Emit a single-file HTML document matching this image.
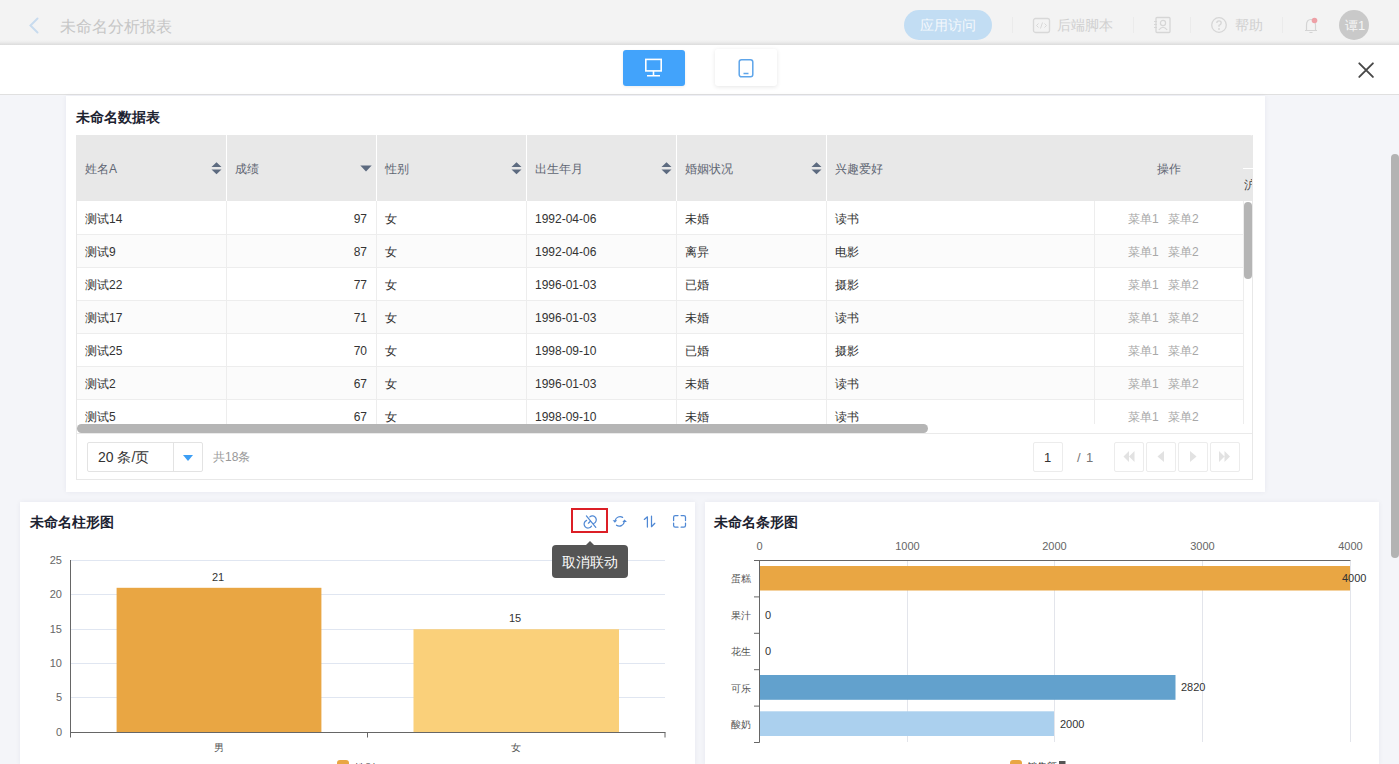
<!DOCTYPE html>
<html><head><meta charset="utf-8">
<style>
*{box-sizing:border-box;margin:0;padding:0}
html,body{width:1399px;height:764px;overflow:hidden}
body{font-family:"Liberation Sans",sans-serif;background:#f4f5f9;position:relative;color:#333;font-size:12px}
.a{position:absolute}
.t{position:absolute;white-space:nowrap;line-height:1}
#hdr{left:0;top:0;width:1399px;height:45px;background:linear-gradient(to bottom,#f3f3f3 0px,#f3f3f3 40px,#ededed 42px,#e4e4e4 43.5px,#dcdcdc 45px)}
#tb{left:0;top:45px;width:1399px;height:50px;background:#fff;border-bottom:1px solid #e0e0e0}
.card{background:#fff;position:absolute;box-shadow:0 0 5px rgba(30,40,80,0.06)}
.title{position:absolute;font-weight:bold;font-size:14px;color:#1d2331;white-space:nowrap;line-height:1}
.th{position:absolute;top:135px;height:66px;background:#e8e8e8}
.htx{position:absolute;color:#5f6673;font-size:12px;line-height:1;white-space:nowrap}
.cell{position:absolute;font-size:12px;color:#333;line-height:1;white-space:nowrap}
.vl{position:absolute;width:1px;background:#ededed}
.hl{position:absolute;height:1px;background:#ededed}
.op{position:absolute;font-size:12px;color:#a8a8a8;line-height:1;white-space:nowrap}
.sep{position:absolute;width:1px;height:16px;top:17px;background:#ebebeb}
.pbtn{position:absolute;top:442px;width:30px;height:30px;border:1px solid #ececec;border-radius:2px;background:#fff}
.yl{position:absolute;font-size:11px;color:#666;line-height:1;white-space:nowrap;text-align:right}
.val{position:absolute;font-size:11px;color:#333;line-height:1;white-space:nowrap}
</style></head><body>

<div id="hdr" class="a"></div>
<div id="tb" class="a"></div>
<div class="card" style="left:66px;top:96px;width:1199px;height:396px"></div>
<div class="title" style="left:76px;top:110px">未命名数据表</div>
<div class="a" style="left:76px;top:135px;width:1177px;height:345px;border:1px solid #e8e8e8;border-top:none"></div>
<div class="th" style="left:76px;width:1177px;border-top-right-radius:3px"></div>
<div class="htx" style="left:85px;top:163px">姓名A</div>
<div class="htx" style="left:235px;top:163px">成绩</div>
<div class="a" style="left:226px;top:135px;width:1px;height:66px;background:#fff"></div>
<div class="htx" style="left:385px;top:163px">性别</div>
<div class="a" style="left:376px;top:135px;width:1px;height:66px;background:#fff"></div>
<div class="htx" style="left:535px;top:163px">出生年月</div>
<div class="a" style="left:526px;top:135px;width:1px;height:66px;background:#fff"></div>
<div class="htx" style="left:685px;top:163px">婚姻状况</div>
<div class="a" style="left:676px;top:135px;width:1px;height:66px;background:#fff"></div>
<div class="htx" style="left:835px;top:163px">兴趣爱好</div>
<div class="a" style="left:826px;top:135px;width:1px;height:66px;background:#fff"></div>
<div class="htx" style="left:1157px;top:163px">操作</div>
<div class="a" style="left:1243px;top:168px;width:10px;height:1px;background:#fff"></div>
<div class="hl" style="left:77px;top:234px;width:1166px"></div>
<div class="cell" style="left:85px;top:213px">测试14</div>
<div class="cell" style="left:226px;width:141px;text-align:right;top:213px">97</div>
<div class="cell" style="left:385px;top:213px">女</div>
<div class="cell" style="left:535px;top:213px">1992-04-06</div>
<div class="cell" style="left:685px;top:213px">未婚</div>
<div class="cell" style="left:835px;top:213px">读书</div>
<div class="op" style="left:1128px;top:213px">菜单1</div>
<div class="op" style="left:1168px;top:213px">菜单2</div>
<div class="a" style="left:77px;top:235px;width:1166px;height:32px;background:#fbfbfb"></div>
<div class="hl" style="left:77px;top:267px;width:1166px"></div>
<div class="cell" style="left:85px;top:246px">测试9</div>
<div class="cell" style="left:226px;width:141px;text-align:right;top:246px">87</div>
<div class="cell" style="left:385px;top:246px">女</div>
<div class="cell" style="left:535px;top:246px">1992-04-06</div>
<div class="cell" style="left:685px;top:246px">离异</div>
<div class="cell" style="left:835px;top:246px">电影</div>
<div class="op" style="left:1128px;top:246px">菜单1</div>
<div class="op" style="left:1168px;top:246px">菜单2</div>
<div class="hl" style="left:77px;top:300px;width:1166px"></div>
<div class="cell" style="left:85px;top:279px">测试22</div>
<div class="cell" style="left:226px;width:141px;text-align:right;top:279px">77</div>
<div class="cell" style="left:385px;top:279px">女</div>
<div class="cell" style="left:535px;top:279px">1996-01-03</div>
<div class="cell" style="left:685px;top:279px">已婚</div>
<div class="cell" style="left:835px;top:279px">摄影</div>
<div class="op" style="left:1128px;top:279px">菜单1</div>
<div class="op" style="left:1168px;top:279px">菜单2</div>
<div class="a" style="left:77px;top:301px;width:1166px;height:32px;background:#fbfbfb"></div>
<div class="hl" style="left:77px;top:333px;width:1166px"></div>
<div class="cell" style="left:85px;top:312px">测试17</div>
<div class="cell" style="left:226px;width:141px;text-align:right;top:312px">71</div>
<div class="cell" style="left:385px;top:312px">女</div>
<div class="cell" style="left:535px;top:312px">1996-01-03</div>
<div class="cell" style="left:685px;top:312px">未婚</div>
<div class="cell" style="left:835px;top:312px">读书</div>
<div class="op" style="left:1128px;top:312px">菜单1</div>
<div class="op" style="left:1168px;top:312px">菜单2</div>
<div class="hl" style="left:77px;top:366px;width:1166px"></div>
<div class="cell" style="left:85px;top:345px">测试25</div>
<div class="cell" style="left:226px;width:141px;text-align:right;top:345px">70</div>
<div class="cell" style="left:385px;top:345px">女</div>
<div class="cell" style="left:535px;top:345px">1998-09-10</div>
<div class="cell" style="left:685px;top:345px">已婚</div>
<div class="cell" style="left:835px;top:345px">摄影</div>
<div class="op" style="left:1128px;top:345px">菜单1</div>
<div class="op" style="left:1168px;top:345px">菜单2</div>
<div class="a" style="left:77px;top:367px;width:1166px;height:32px;background:#fbfbfb"></div>
<div class="hl" style="left:77px;top:399px;width:1166px"></div>
<div class="cell" style="left:85px;top:378px">测试2</div>
<div class="cell" style="left:226px;width:141px;text-align:right;top:378px">67</div>
<div class="cell" style="left:385px;top:378px">女</div>
<div class="cell" style="left:535px;top:378px">1996-01-03</div>
<div class="cell" style="left:685px;top:378px">未婚</div>
<div class="cell" style="left:835px;top:378px">读书</div>
<div class="op" style="left:1128px;top:378px">菜单1</div>
<div class="op" style="left:1168px;top:378px">菜单2</div>
<div class="cell" style="left:85px;top:411px">测试5</div>
<div class="cell" style="left:226px;width:141px;text-align:right;top:411px">67</div>
<div class="cell" style="left:385px;top:411px">女</div>
<div class="cell" style="left:535px;top:411px">1998-09-10</div>
<div class="cell" style="left:685px;top:411px">未婚</div>
<div class="cell" style="left:835px;top:411px">读书</div>
<div class="op" style="left:1128px;top:411px">菜单1</div>
<div class="op" style="left:1168px;top:411px">菜单2</div>
<div class="vl" style="left:1243px;top:201px;height:223px"></div>
<div class="t" style="left:1244px;top:179px;font-size:12px;color:#444;width:8px;overflow:hidden">沪</div>
<div class="vl" style="left:226px;top:201px;height:223px"></div>
<div class="vl" style="left:376px;top:201px;height:223px"></div>
<div class="vl" style="left:526px;top:201px;height:223px"></div>
<div class="vl" style="left:676px;top:201px;height:223px"></div>
<div class="vl" style="left:826px;top:201px;height:223px"></div>
<div class="vl" style="left:1094px;top:201px;height:223px"></div>
<div class="a" style="left:1244px;top:202px;width:8px;height:77px;border-radius:4px;background:#b5b5b5"></div>
<div class="a" style="left:77px;top:424px;width:851px;height:9px;border-radius:4.5px;background:#b5b5b5"></div>
<div class="hl" style="left:77px;top:433px;width:1175px;background:#eaeaea"></div>
<div class="a" style="left:87px;top:442px;width:116px;height:30px;border:1px solid #e3e3e3;border-radius:2px"></div>
<div class="a" style="left:173px;top:443px;width:1px;height:28px;background:#e3e3e3"></div>
<div class="t" style="left:98px;top:450px;font-size:14px;color:#333">20 条/页</div>
<div class="a" style="left:183px;top:455px;width:0;height:0;border-left:5px solid transparent;border-right:5px solid transparent;border-top:6px solid #3c9ef5"></div>
<div class="t" style="left:213px;top:451px;font-size:12px;color:#999">共18条</div>
<div class="pbtn" style="left:1033px"></div>
<div class="t" style="left:1044px;top:451px;font-size:13px;color:#333">1</div>
<div class="t" style="left:1077px;top:451px;font-size:13px;color:#777">/</div>
<div class="t" style="left:1086px;top:451px;font-size:13px;color:#777">1</div>
<div class="pbtn" style="left:1114px;width:30px"></div>
<div class="pbtn" style="left:1146px;width:30px"></div>
<div class="pbtn" style="left:1178px;width:30px"></div>
<div class="pbtn" style="left:1210px;width:30px"></div>
<svg class="a" style="left:211px;top:161px" width="11" height="15" viewBox="0 0 11 15"><path d="M0.5 6 L5.5 1.2 L10.5 6 Z M0.5 8.5 L5.5 13.3 L10.5 8.5 Z" fill="#5d6b80"/></svg>
<svg class="a" style="left:511px;top:161px" width="11" height="15" viewBox="0 0 11 15"><path d="M0.5 6 L5.5 1.2 L10.5 6 Z M0.5 8.5 L5.5 13.3 L10.5 8.5 Z" fill="#5d6b80"/></svg>
<svg class="a" style="left:661px;top:161px" width="11" height="15" viewBox="0 0 11 15"><path d="M0.5 6 L5.5 1.2 L10.5 6 Z M0.5 8.5 L5.5 13.3 L10.5 8.5 Z" fill="#5d6b80"/></svg>
<svg class="a" style="left:811px;top:161px" width="11" height="15" viewBox="0 0 11 15"><path d="M0.5 6 L5.5 1.2 L10.5 6 Z M0.5 8.5 L5.5 13.3 L10.5 8.5 Z" fill="#5d6b80"/></svg>
<svg class="a" style="left:360px;top:165px" width="12" height="7" viewBox="0 0 12 7"><path d="M0.3 0.5 L11.7 0.5 L6 6.5 Z" fill="#5d6b80"/></svg>
<svg class="a" style="left:1114px;top:442px" width="130" height="30" viewBox="0 0 130 30" fill="#e2e2e2"><path d="M15 9 L15 20 L9.5 14.5 Z M20.5 9 L20.5 20 L15 14.5 Z"/><path d="M50 9 L50 20 L43.5 14.5 Z"/><path d="M76 9 L76 20 L82.5 14.5 Z"/><path d="M105 9 L105 20 L110.5 14.5 Z M110.5 9 L110.5 20 L116 14.5 Z"/></svg>
<div class="card" style="left:20px;top:502px;width:675px;height:263px"></div>
<div class="card" style="left:705px;top:502px;width:674px;height:263px"></div>
<div class="title" style="left:30px;top:515px">未命名柱形图</div>
<div class="title" style="left:714px;top:515px">未命名条形图</div>
<svg class="a" style="left:27px;top:17px" width="14" height="17" viewBox="0 0 14 17"><path d="M10.5 1.5 L3.5 8.5 L10.5 15.5" fill="none" stroke="#c8dbee" stroke-width="2" stroke-linecap="round"/></svg>
<div class="t" style="left:60px;top:19px;font-size:16px;color:#c6c6c6">未命名分析报表</div>
<div class="a" style="left:904px;top:10px;width:88px;height:30px;border-radius:15px;background:#c2ddf3"></div>
<div class="t" style="left:920px;top:18px;font-size:14px;color:#f4f8fc">应用访问</div>
<div class="sep" style="left:1012px"></div>
<div class="sep" style="left:1133px"></div>
<div class="sep" style="left:1190px"></div>
<div class="sep" style="left:1282px"></div>
<svg class="a" style="left:1032px;top:17px" width="19" height="17" viewBox="0 0 19 17"><rect x="1.5" y="1.5" width="16" height="14" rx="2" fill="none" stroke="#d8d8d8" stroke-width="1.3"/><path d="M6.5 6.5 L4.5 8.5 L6.5 10.5 M12.5 6.5 L14.5 8.5 L12.5 10.5 M10.5 5.5 L8.5 11.5" fill="none" stroke="#d8d8d8" stroke-width="1"/></svg>
<div class="t" style="left:1057px;top:18px;font-size:14px;color:#d0d0d0">后端脚本</div>
<svg class="a" style="left:1153px;top:16px" width="19" height="18" viewBox="0 0 19 18"><rect x="3" y="1.5" width="14" height="15" rx="1" fill="none" stroke="#d6d6d6" stroke-width="1.3"/><circle cx="10" cy="7" r="2.6" fill="none" stroke="#d6d6d6" stroke-width="1.2"/><path d="M5.8 14 Q10 8.5 14.2 14" fill="none" stroke="#d6d6d6" stroke-width="1.2"/><path d="M1 5.5h3M1 8.5h3M1 11.5h3" stroke="#d6d6d6" stroke-width="1"/></svg>
<svg class="a" style="left:1210px;top:16px" width="18" height="18" viewBox="0 0 18 18"><circle cx="9" cy="9" r="7.3" fill="none" stroke="#d6d6d6" stroke-width="1.3"/><path d="M6.8 7 Q6.8 4.8 9 4.8 Q11.2 4.8 11.2 6.9 Q11.2 8.3 9 9.3 V10.8" fill="none" stroke="#d6d6d6" stroke-width="1.3"/><circle cx="9" cy="13" r="0.9" fill="#d6d6d6"/></svg>
<div class="t" style="left:1235px;top:18px;font-size:14px;color:#d0d0d0">帮助</div>
<svg class="a" style="left:1302px;top:16px" width="18" height="18" viewBox="0 0 18 18"><path d="M3 14.5 H15 M4.5 14.5 V9 Q4.5 3.5 9 3.5 Q13.5 3.5 13.5 9 V14.5 M7.5 16.5 H10.5" fill="none" stroke="#d4d4d4" stroke-width="1.2"/><circle cx="12.5" cy="4.5" r="2.8" fill="#eea0a6"/></svg>
<div class="a" style="left:1339px;top:10px;width:30px;height:30px;border-radius:15px;background:#c9c9c9"></div>
<div class="t" style="left:1345px;top:19px;font-size:13px;color:#f5f5f5">谭1</div>
<div class="a" style="left:623px;top:50px;width:62px;height:36px;border-radius:3px;background:#42a3fb;box-shadow:0 1px 3px rgba(0,0,0,0.08)"></div>
<svg class="a" style="left:644px;top:57px" width="20" height="21" viewBox="0 0 20 21"><rect x="1.8" y="2.4" width="15.4" height="11.5" fill="none" stroke="#fff" stroke-width="1.6"/><path d="M9.5 13.9 V18.6 M3 18.8 H16" fill="none" stroke="#fff" stroke-width="1.6"/></svg>
<div class="a" style="left:715px;top:49px;width:62px;height:37px;border-radius:3px;background:#fff;box-shadow:0 1px 4px rgba(0,0,0,0.10)"></div>
<svg class="a" style="left:736px;top:57px" width="20" height="22" viewBox="0 0 20 22"><rect x="3.2" y="2.8" width="13.6" height="17" rx="2.3" fill="none" stroke="#5ea5ea" stroke-width="1.5"/><path d="M7.5 16.5 H12.5" stroke="#5ea5ea" stroke-width="1.5"/></svg>
<svg class="a" style="left:1356px;top:60px" width="20" height="20" viewBox="0 0 20 20"><path d="M3.3 3.3 L16.9 16.9 M16.9 3.3 L3.3 16.9" stroke="#484848" stroke-width="1.9" stroke-linecap="round"/></svg>
<svg class="a" style="left:0;top:0" width="1399" height="764" viewBox="0 0 1399 764" font-family="Liberation Sans, sans-serif"><text x="62" y="736" font-size="11" fill="#666" text-anchor="end">0</text><line x1="71" x2="665" y1="697.5" y2="697.5" stroke="#e0e6f1" stroke-width="1"/><text x="62" y="701" font-size="11" fill="#666" text-anchor="end">5</text><line x1="71" x2="665" y1="663.5" y2="663.5" stroke="#e0e6f1" stroke-width="1"/><text x="62" y="667" font-size="11" fill="#666" text-anchor="end">10</text><line x1="71" x2="665" y1="629.5" y2="629.5" stroke="#e0e6f1" stroke-width="1"/><text x="62" y="633" font-size="11" fill="#666" text-anchor="end">15</text><line x1="71" x2="665" y1="594.5" y2="594.5" stroke="#e0e6f1" stroke-width="1"/><text x="62" y="598" font-size="11" fill="#666" text-anchor="end">20</text><line x1="71" x2="665" y1="560.5" y2="560.5" stroke="#e0e6f1" stroke-width="1"/><text x="62" y="564" font-size="11" fill="#666" text-anchor="end">25</text><rect x="116.6" y="587.8" width="204.8" height="144.2" fill="#e9a643"/><rect x="413.5" y="629.2" width="205.5" height="102.8" fill="#fad07a"/><line x1="70.5" x2="70.5" y1="560" y2="732.5" stroke="#666" stroke-width="1"/><line x1="70" x2="665.5" y1="732.5" y2="732.5" stroke="#666" stroke-width="1"/><line x1="70.5" x2="70.5" y1="732.5" y2="737.5" stroke="#666" stroke-width="1"/><line x1="367.5" x2="367.5" y1="732.5" y2="737.5" stroke="#666" stroke-width="1"/><line x1="665" x2="665" y1="732.5" y2="737.5" stroke="#666" stroke-width="1"/><text x="218" y="581" font-size="11" fill="#333" text-anchor="middle">21</text><text x="515" y="622" font-size="11" fill="#333" text-anchor="middle">15</text><text x="218.5" y="750.5" font-size="10" fill="#555" text-anchor="middle">男</text><text x="515.5" y="750.5" font-size="10" fill="#555" text-anchor="middle">女</text><rect x="337" y="760" width="12" height="10" rx="3" fill="#e9a643"/><text x="355" y="771" font-size="10" fill="#333">性别</text><text x="759.5" y="550" font-size="11" fill="#666" text-anchor="middle">0</text><line x1="907.5" x2="907.5" y1="561" y2="742" stroke="#e3e5eb" stroke-width="1"/><text x="907.5" y="550" font-size="11" fill="#666" text-anchor="middle">1000</text><line x1="1054.5" x2="1054.5" y1="561" y2="742" stroke="#e3e5eb" stroke-width="1"/><text x="1054.5" y="550" font-size="11" fill="#666" text-anchor="middle">2000</text><line x1="1202.5" x2="1202.5" y1="561" y2="742" stroke="#e3e5eb" stroke-width="1"/><text x="1202.5" y="550" font-size="11" fill="#666" text-anchor="middle">3000</text><line x1="1350.5" x2="1350.5" y1="561" y2="742" stroke="#e3e5eb" stroke-width="1"/><text x="1350.5" y="550" font-size="11" fill="#666" text-anchor="middle">4000</text><rect x="759" y="566" width="591" height="24.5" fill="#e9a643"/><rect x="759" y="675" width="416.5" height="24.8" fill="#62a1cd"/><rect x="759" y="711.3" width="295" height="24.7" fill="#abd0ee"/><line x1="759.5" x2="759.5" y1="560.5" y2="742.5" stroke="#666" stroke-width="1"/><line x1="759" x2="1350.5" y1="560.5" y2="560.5" stroke="#666" stroke-width="1"/><line x1="754" x2="759.5" y1="560.5" y2="560.5" stroke="#666" stroke-width="1"/><line x1="754" x2="759.5" y1="596.9" y2="596.9" stroke="#666" stroke-width="1"/><line x1="754" x2="759.5" y1="633.3" y2="633.3" stroke="#666" stroke-width="1"/><line x1="754" x2="759.5" y1="669.7" y2="669.7" stroke="#666" stroke-width="1"/><line x1="754" x2="759.5" y1="706.1" y2="706.1" stroke="#666" stroke-width="1"/><line x1="754" x2="759.5" y1="742.5" y2="742.5" stroke="#666" stroke-width="1"/><text x="751" y="582.3" font-size="10" fill="#555" text-anchor="end">蛋糕</text><text x="751" y="618.7" font-size="10" fill="#555" text-anchor="end">果汁</text><text x="751" y="655.1" font-size="10" fill="#555" text-anchor="end">花生</text><text x="751" y="691.5" font-size="10" fill="#555" text-anchor="end">可乐</text><text x="751" y="727.9" font-size="10" fill="#555" text-anchor="end">酸奶</text><text x="1342" y="582" font-size="11" fill="#333">4000</text><text x="765" y="619" font-size="11" fill="#333">0</text><text x="765" y="655" font-size="11" fill="#333">0</text><text x="1181" y="691" font-size="11" fill="#333">2820</text><text x="1060" y="728" font-size="11" fill="#333">2000</text><rect x="1010" y="760" width="12" height="10" rx="3" fill="#e9a643"/><text x="1027" y="770" font-size="10" fill="#333">销售额</text><rect x="1059" y="761" width="6.5" height="5" fill="#555"/></svg>
<div class="a" style="left:571px;top:508px;width:37px;height:25px;border:2px solid #dc1f26"></div>
<svg class="a" style="left:578px;top:511px" width="24" height="20" viewBox="0 0 24 20"><g fill="none" stroke="#4f88d4" stroke-width="1.25" stroke-linecap="round"><path d="M8.4 4.9 L17.8 16.3"/><path d="M11.8 5.9 A3.9 3.9 0 1 1 15.7 12.5"/><path d="M8.6 9.3 A4 4 0 1 0 13.5 15.1"/><path d="M10.4 12.2 L12.4 10.3"/></g></svg>
<svg class="a" style="left:608px;top:511px" width="24" height="20" viewBox="0 0 24 20"><g fill="none" stroke="#4f88d4" stroke-width="1.25" stroke-linecap="round"><path d="M14.6 6.4 A5 5 0 0 0 7.2 9.3"/><path d="M8.5 14.2 A5 5 0 0 0 16.3 10.6"/></g><path d="M4.6 9.2 L9.2 9.2 L6.9 11.7 Z" fill="#4f88d4"/><path d="M14.3 11.1 L18.9 11.1 L16.6 8.6 Z" fill="#4f88d4"/></svg>
<svg class="a" style="left:638px;top:511px" width="24" height="20" viewBox="0 0 24 20"><g fill="none" stroke="#4f88d4" stroke-width="1.25" stroke-linecap="round" stroke-linejoin="round"><path d="M6.3 8.4 L9.4 5.8 L9.4 16"/><path d="M13.5 5.2 L13.5 15.7 L16.8 12.3"/></g></svg>
<svg class="a" style="left:668px;top:511px" width="24" height="20" viewBox="0 0 24 20"><g fill="none" stroke="#4f88d4" stroke-width="1.25" stroke-linecap="round"><path d="M5.6 9.6 V6.2 Q5.6 4.5 7.3 4.5 H10"/><path d="M13.1 4.5 H15.8 Q17.5 4.5 17.5 6.2 V9.6"/><path d="M17.5 12.1 V14.5 Q17.5 16.2 15.8 16.2 H13.1"/><path d="M10 16.2 H7.3 Q5.6 16.2 5.6 14.5 V12.1"/></g></svg>
<div class="a" style="left:552px;top:545px;width:76px;height:33px;border-radius:4px;background:#555"></div>
<div class="a" style="left:586px;top:541px;width:0;height:0;border-left:4px solid transparent;border-right:4px solid transparent;border-bottom:4px solid #555"></div>
<div class="t" style="left:562px;top:555px;font-size:14px;color:#fff">取消联动</div>
<div class="a" style="left:1391px;top:154px;width:8px;height:404px;border-radius:4px;background:#b3b3b3"></div>
</body></html>
